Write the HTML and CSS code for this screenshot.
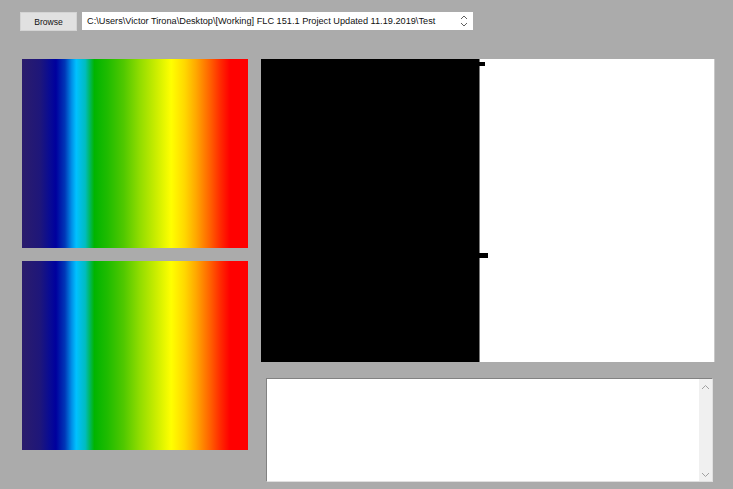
FILE: index.html
```html
<!DOCTYPE html>
<html>
<head>
<meta charset="utf-8">
<link rel="stylesheet" href="styles.css">
</head>
<body>
<div class="app">
  <div class="toolbar">
    <button class="btn">Browse</button>
    <div class="pathbox">
      <span class="path">C:\Users\Victor Tirona\Desktop\[Working] FLC 151.1 Project Updated 11.19.2019\Test</span>
      <svg class="spin" width="8" height="14" viewBox="0 0 8 14"><path d="M1 5 L4 2 L7 5 M1 9 L4 12 L7 9" fill="none" stroke="#606060" stroke-width="1"/></svg>
    </div>
  </div>
  <div class="main">
    <div class="left">
      <div class="grad"></div>
      <div class="grad"></div>
    </div>
    <div class="right">
      <div class="panel">
        <div class="black"></div>
        <div class="white"></div>
        <div class="tick t1"></div>
        <div class="tick t2"></div>
      </div>
      <div class="textarea">
        <div class="ta-body"></div>
        <div class="scroll">
          <svg width="9" height="6" viewBox="0 0 9 6"><path d="M1 5 L4.5 1.5 L8 5" fill="none" stroke="#a0a0a0" stroke-width="1"/></svg>
          <svg width="9" height="6" viewBox="0 0 9 6"><path d="M1 1 L4.5 4.5 L8 1" fill="none" stroke="#a0a0a0" stroke-width="1"/></svg>
        </div>
      </div>
    </div>
  </div>
</div>
</body>
</html>
```
FILE: styles.css
```css
html, body {
  margin: 0;
  padding: 0;
  background: #ababab;
  width: 733px;
  height: 489px;
  overflow: hidden;
  font-family: "Liberation Sans", Arial, sans-serif;
}
.app {
  display: flex;
  flex-direction: column;
}
.toolbar {
  display: flex;
  align-items: flex-start;
  padding: 12px 0 0 20px;
  gap: 5px;
  height: 19px;
}
.btn {
  box-sizing: border-box;
  width: 57px;
  height: 19px;
  margin: 0;
  padding: 0;
  background: #e1e1e1;
  border: 1px solid #d4d4d4;
  font-family: "Liberation Sans", Arial, sans-serif;
  font-size: 8.6px;
  color: #111;
}
.pathbox {
  box-sizing: border-box;
  width: 391px;
  height: 18px;
  background: #fff;
  display: flex;
  align-items: center;
  justify-content: space-between;
  padding: 0 5px 0 5px;
}
.path {
  font-size: 9.2px;
  color: #111;
  white-space: nowrap;
}
.spin {
  flex: none;
}
.main {
  display: flex;
  gap: 13px;
  padding: 28px 0 0 22px;
}
.left {
  display: flex;
  flex-direction: column;
  gap: 13px;
}
.grad {
  width: 226px;
  height: 189px;
  background: linear-gradient(to right,
    #2b1c6c 0%, #1e167a 8%, #0a0c92 12%, #00009e 15%,
    #0038b8 19%, #0090e8 22%, #00c0ff 24%, #00bcc0 28%,
    #00b400 32%, #20bc00 38%, #50c800 45%, #90dc00 52%,
    #c8ec00 59%, #ffff00 66%, #ffd800 72%, #ffa800 77%,
    #ff6400 83%, #ff2800 88%, #ff0000 92%, #ff0000 100%);
}
.right {
  display: flex;
  flex-direction: column;
  gap: 16px;
}
.panel {
  position: relative;
  display: flex;
  width: 454px;
  height: 303px;
}
.black {
  width: 218px;
  background: #000;
  border-right: 1px solid #7a7a7a;
}
.white {
  flex: 1;
  background: #fff;
  border-right: 1px solid #c8c8c8;
}
.tick {
  position: absolute;
  background: #000;
}
.t1 { left: 218px; top: 3px; width: 6px; height: 4px; }
.t2 { left: 218px; top: 194px; width: 9px; height: 5px; }
.textarea {
  margin-left: 5px;
  box-sizing: border-box;
  width: 447px;
  height: 104px;
  display: flex;
  background: #fff;
  border-top: 1px solid #828282;
  border-left: 1px solid #828282;
  border-right: 1px solid #e0e0e0;
  border-bottom: 1px solid #e0e0e0;
}
.ta-body {
  flex: 1;
}
.scroll {
  width: 13px;
  background: #f0f0f0;
  display: flex;
  flex-direction: column;
  justify-content: space-between;
  align-items: center;
  padding: 5px 0 3px;
}
```
